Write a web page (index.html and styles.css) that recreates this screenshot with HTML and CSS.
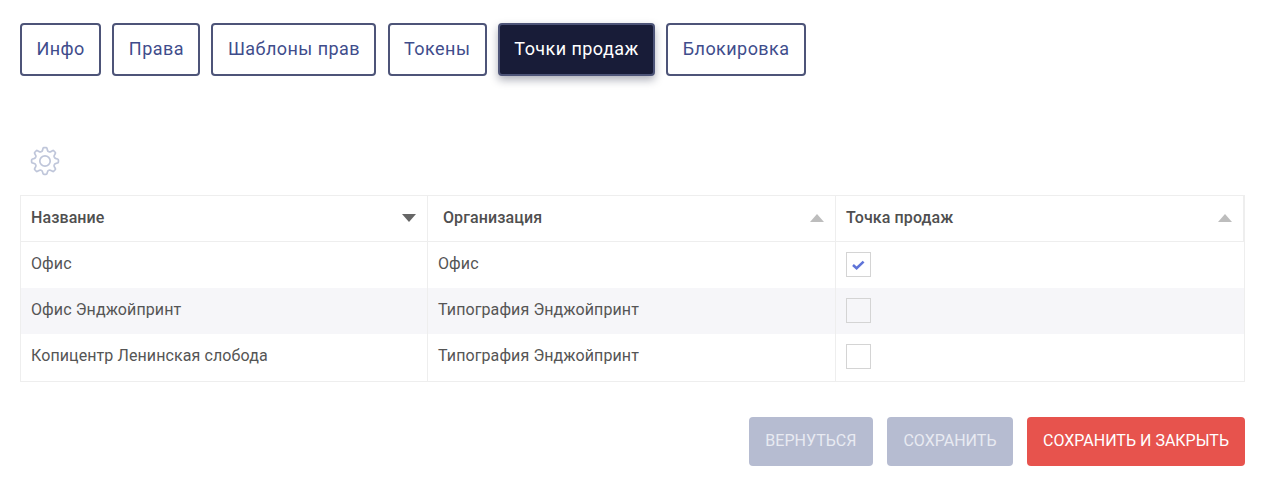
FILE: index.html
```html
<!DOCTYPE html>
<html lang="ru">
<head>
<meta charset="utf-8">
<title>Точки продаж</title>
<link rel="stylesheet" href="styles.css">
</head>
<body>
<main class="page">
  <nav class="tabs">
    <a class="tab">Инфо</a>
    <a class="tab">Права</a>
    <a class="tab">Шаблоны прав</a>
    <a class="tab">Токены</a>
    <a class="tab tab-active">Точки продаж</a>
    <a class="tab">Блокировка</a>
  </nav>
  <div class="toolbar">
    <svg class="gear" width="30" height="30" viewBox="-15 -15 30 30" aria-hidden="true">
      <defs>
        <path id="tooth" d="M-3.83 -9.24Q-2.6 -9.7 -2.4 -11L-2 -12.6Q-1.8 -13.4 -1 -13.4H1Q1.8 -13.4 2 -12.6L2.4 -11Q2.6 -9.7 3.83 -9.24"/>
      </defs>
      <g class="gear-lines">
        <use href="#tooth"/>
        <use href="#tooth" transform="rotate(45)"/>
        <use href="#tooth" transform="rotate(90)"/>
        <use href="#tooth" transform="rotate(135)"/>
        <use href="#tooth" transform="rotate(180)"/>
        <use href="#tooth" transform="rotate(225)"/>
        <use href="#tooth" transform="rotate(270)"/>
        <use href="#tooth" transform="rotate(315)"/>
        <circle r="5.2"/>
      </g>
    </svg>
  </div>
  <table class="grid">
    <colgroup><col class="col-a"><col class="col-b"><col></colgroup>
    <thead>
      <tr>
        <th class="cell-a"><div class="head"><span>Название</span><i class="sort sort-down"></i></div></th>
        <th class="cell-b"><div class="head"><span>Организация</span><i class="sort"></i></div></th>
        <th class="cell-c"><div class="head"><span>Точка продаж</span><i class="sort"></i></div></th>
      </tr>
    </thead>
    <tbody>
      <tr>
        <td>Офис</td><td>Офис</td>
        <td><span class="check"><svg width="15" height="12" viewBox="0 0 15 12" aria-hidden="true"><path class="tick" d="M2 6L5.6 9.2L12.6 2.6"/></svg></span></td>
      </tr>
      <tr class="alt">
        <td>Офис Энджойпринт</td><td>Типография Энджойпринт</td>
        <td><span class="check check-off"></span></td>
      </tr>
      <tr>
        <td>Копицентр Ленинская слобода</td><td>Типография Энджойпринт</td>
        <td><span class="check check-last"></span></td>
      </tr>
    </tbody>
  </table>
  <footer class="actions">
    <button class="btn btn-muted">ВЕРНУТЬСЯ</button>
    <button class="btn btn-muted">СОХРАНИТЬ</button>
    <button class="btn btn-red">СОХРАНИТЬ И ЗАКРЫТЬ</button>
  </footer>
</main>
</body>
</html>
```
FILE: styles.css
```css
html, body { margin: 0; padding: 0; background: #fff; }
body { font-family: Roboto, "Liberation Sans", sans-serif; overflow: hidden; }
.page { width: 1225px; padding: 23px 0 0 20px; }

.tabs { display: flex; gap: 11.05px; }
.tab {
  display: block;
  height: 53px;
  box-sizing: border-box;
  padding: 0 14.5px;
  line-height: 48px;
  font-size: 18px;
  letter-spacing: .44px;
  color: #3f4d8c;
  background: #fff;
  border: 2px solid #4d5478;
  border-radius: 4px;
}
.tab-active {
  color: #fff;
  background: #181c38;
  box-shadow: 0 4px 8px rgba(24, 28, 56, .35);
}

.toolbar { height: 119px; display: flex; align-items: flex-end; padding-left: 10px; box-sizing: border-box; }
.gear { display: block; margin-bottom: 19px; }
.gear-lines path, .gear-lines use, .gear-lines circle { fill: none; stroke: #bfc6da; stroke-width: 1.7; }

.grid { width: 1225px; border-collapse: collapse; table-layout: fixed; font-size: 16px; color: #555; border: 1px solid #eee; }
.col-a { width: 407px; }
.col-b { width: 408px; }
.grid th, .grid td { border: 1px solid #eee; padding: 0 10px; text-align: left; }
.grid th { height: 43px; font-size: 16px; font-weight: 500; letter-spacing: .1px; color: #4f4f4f; padding-bottom: 2px; }
.grid td { height: 42px; letter-spacing: .1px; border-top: 0; border-bottom: 0; padding-bottom: 4px; }
.grid tbody tr:last-child td { height: 43px; }
.grid .cell-b { padding-left: 15px; }
.grid .cell-c { border-right: 2px solid #eee; }
.alt td { background: #f6f6f9; }

.head { display: flex; justify-content: space-between; align-items: center; }
.sort { width: 0; height: 0; border-left: 7.5px solid transparent; border-right: 7.5px solid transparent; border-bottom: 8px solid #bdbdbd; margin-right: 1px; }
.sort-down { border-bottom: 0; border-top: 8px solid #666; }

.check { display: block; width: 25px; height: 25px; box-sizing: border-box; border: 1px solid #d4d4d4; background: #fff; margin-top: 3px; }
.check-last { margin-top: 2px; }
.check svg { display: block; margin: 6px 0 0 4px; }
.check-off { background: #f6f6f9; }
.tick { fill: none; stroke: #5f74d8; stroke-width: 2.6; }

.actions { display: flex; justify-content: flex-end; gap: 14px; margin-top: 35px; }
.btn { height: 49px; padding: 0 16.5px 2px; border: 0; border-radius: 4px; color: #fff; font: 400 16px Roboto, "Liberation Sans", sans-serif; }
.btn-muted { background: #b6bcd1; color: #e8eaf1; }
.btn-red { background: #e7534d; padding: 0 16px 2px; }
```
